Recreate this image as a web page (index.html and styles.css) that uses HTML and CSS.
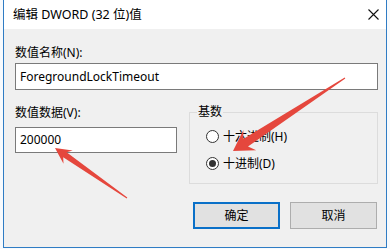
FILE: index.html
```html
<!DOCTYPE html>
<html>
<head>
	<title>编辑 DWORD (32 位)值</title>
	<link rel="stylesheet" href="styles.css">
</head>
<body>
	<!-- the dialog window -->
	<div class="window">
		<div class="titlebar">
			<span class="title">编辑 DWORD (32 位)值</span>
			<svg class="close" width="11" height="11" viewBox="0 0 11 11">
				<path d="M0.5 0.5 L10.5 10.5 M10.5 0.5 L0.5 10.5" stroke="#111" stroke-width="1.1" fill="none"/>
			</svg>
		</div>
		<div class="content">
			<div class="label first">数值名称(N):</div>
			<div class="textbox wide">ForegroundLockTimeout</div>
			<div class="row">
				<div class="col">
					<div class="label">数值数据(V):</div>
					<div class="textbox value">200000</div>
				</div>
				<fieldset class="group">
					<legend>基数</legend>
					<div class="radio"><span class="dot"></span>十六进制(H)</div>
					<div class="radio"><span class="dot checked"></span>十进制(D)</div>
				</fieldset>
			</div>
			<div class="buttons">
				<div class="btn default">确定</div>
				<div class="btn">取消</div>
			</div>
		</div>
	</div>

	<!-- red annotation arrows drawn over the dialog -->
	<svg class="arrows" width="390" height="249" viewBox="0 0 390 249">
		<polygon fill="#e5473d" points="233,151 256.2,150.3 248,146.6 345.3,78.4 344.7,77.6 243.2,139.1 243.4,130.1"/>
		<polygon fill="#e5473d" points="55,148 63.5,163.7 63.2,157.3 126.7,198.4 127.3,197.6 66.6,152.3 72.7,150.5"/>
	</svg>
</body>
</html>
```

FILE: styles.css
```css
body {
	margin: 0;
	width: 390px;
	height: 249px;
	background: #f7fafd;
	font-family: "Noto Sans", "Noto Sans CJK SC", sans-serif;
	font-size: 12px;
	color: #000;
	position: relative;
	overflow: hidden;
}

.window {
	box-sizing: border-box;
	margin-left: 3px;
	width: 384px;
	height: 248px;
	background: #f0f0f0;
	border: 1px solid #2f7cc4;
	border-top: none;
}

.titlebar {
	height: 29px;
	background: #fff;
	display: flex;
	align-items: center;
	justify-content: space-between;
	padding: 0 7px 0 9px;
}
.title {
	font-size: 12.5px;
	line-height: 16px;
}

.content {
	padding: 0 8px 0 11px;
}

.label {
	line-height: 16px;
}
.label.first {
	margin-top: 16px;
	margin-bottom: 2px;
}

.textbox {
	box-sizing: border-box;
	background: #fff;
	border: 1px solid #7a7a7a;
	line-height: 16px;
	padding: 4px 4px;
}
.wide {
	height: 27px;
	padding-top: 5px;
}
.value {
	height: 26px;
	margin-top: 6px;
}

.row {
	display: flex;
	gap: 12px;
	margin-top: 15px;
}
.col {
	width: 162px;
}

.group {
	box-sizing: border-box;
	margin: 0;
	width: 189px;
	height: 79px;
	border: 1px solid #dcdcdc;
	padding: 4px 8px 0 16px;
	min-width: 0;
}
.group legend {
	line-height: 14px;
	padding: 0 1px;
	margin-left: -9px;
}

.radio {
	display: flex;
	align-items: center;
	gap: 4px;
	height: 27px;
	line-height: 16px;
}
.dot {
	box-sizing: border-box;
	width: 13px;
	height: 13px;
	border: 1px solid #333;
	border-radius: 50%;
	background: #fff;
	display: flex;
	align-items: center;
	justify-content: center;
}
.dot.checked::after {
	content: "";
	width: 7px;
	height: 7px;
	border-radius: 50%;
	background: #333;
}

.buttons {
	display: flex;
	justify-content: flex-end;
	gap: 10px;
	margin-top: 18px;
	padding-right: 1px;
}
.btn {
	box-sizing: border-box;
	width: 87px;
	height: 27px;
	background: #e1e1e1;
	border: 1px solid #adadad;
	display: flex;
	align-items: center;
	justify-content: center;
	line-height: 16px;
}
.btn.default {
	border: 2px solid #0a70c8;
}

.arrows {
	position: absolute;
	left: 0;
	top: 0;
}
```
